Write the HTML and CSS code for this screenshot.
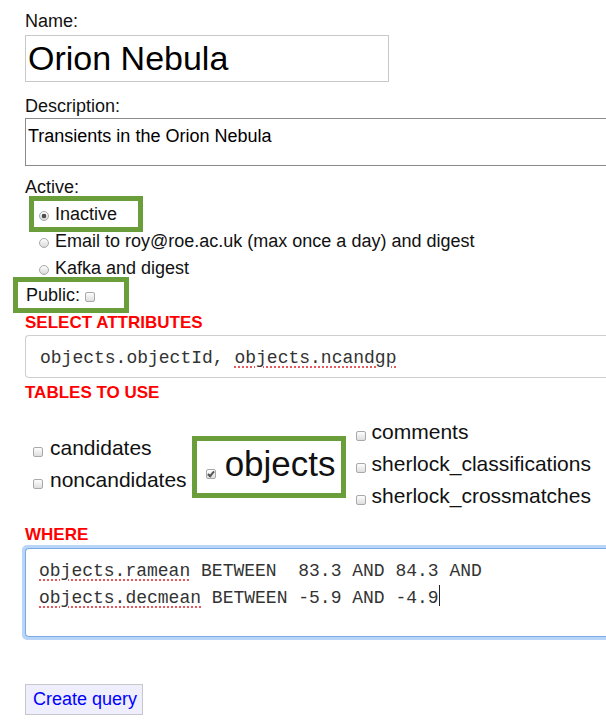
FILE: index.html
```html
<!DOCTYPE html>
<html lang="en">
<head>
<meta charset="utf-8">
<title>Create query</title>
<link rel="stylesheet" href="styles.css">
</head>
<body>
<form class="query-form">
  <label class="field-label" for="name">Name:</label>
  <input class="name-input" id="name" type="text" value="Orion Nebula">
  <label class="field-label desc-label" for="desc">Description:</label>
  <textarea class="desc-input" id="desc">Transients in the Orion Nebula</textarea>
  <div class="field-label active-label">Active:</div>
  <div class="radio-list">
    <label class="option highlight"><input class="radio" type="radio" name="active" checked>Inactive</label>
    <label class="option"><input class="radio" type="radio" name="active">Email to roy@roe.ac.uk (max once a day) and digest</label>
    <label class="option"><input class="radio" type="radio" name="active">Kafka and digest</label>
  </div>
  <label class="public highlight">Public: <input class="check" type="checkbox"></label>
  <h3 class="section-title">SELECT ATTRIBUTES</h3>
  <div class="code-box select-box">objects.objectId, <span class="misspelled">objects.ncandgp</span></div>
  <h3 class="section-title">TABLES TO USE</h3>
  <div class="tables">
    <div class="table-col left-col">
      <label class="table-opt"><input class="check" type="checkbox">candidates</label>
      <label class="table-opt"><input class="check" type="checkbox">noncandidates</label>
    </div>
    <label class="objects highlight"><input class="check" type="checkbox" checked>objects</label>
    <div class="table-col right-col">
      <label class="table-opt"><input class="check" type="checkbox">comments</label>
      <label class="table-opt"><input class="check" type="checkbox">sherlock_classifications</label>
      <label class="table-opt"><input class="check" type="checkbox">sherlock_crossmatches</label>
    </div>
  </div>
  <h3 class="section-title where-title">WHERE</h3>
  <div class="code-box where-box"><span class="misspelled">objects.ramean</span> BETWEEN  83.3 AND 84.3 AND
<span class="misspelled">objects.decmean</span> BETWEEN -5.9 AND -4.9<span class="caret"></span></div>
  <button class="create-btn" type="button">Create query</button>
</form>
</body>
</html>
```
FILE: styles.css
```css
html, body {
  margin: 0;
  padding: 0;
  overflow: hidden;
  background: #fff;
}
body {
  font-family: "Liberation Sans", Arial, Helvetica, sans-serif;
  font-size: 18px;
  color: #111;
}
.query-form {
  padding: 11px 0 0 25px;
}
.field-label {
  display: block;
  line-height: 20px;
}
.name-input {
  display: block;
  box-sizing: border-box;
  margin: 4px 0 0;
  width: 364px;
  height: 47px;
  border: 1px solid #c9c9c9;
  border-radius: 0;
  padding: 0 2px;
  font: 34px "Liberation Sans", Arial, sans-serif;
  color: #000;
  background: #fff;
  outline: none;
}
.desc-label {
  margin-top: 14px;
}
.desc-input {
  display: block;
  box-sizing: border-box;
  margin: 2px 0 0;
  width: 100%;
  height: 48px;
  border: 1px solid #8a8a8a;
  border-right: none;
  border-radius: 0;
  padding: 6px 2px;
  font: 18px/22px "Liberation Sans", Arial, sans-serif;
  color: #000;
  resize: none;
  outline: none;
}
.active-label {
  margin-top: 11px;
}
.radio-list {
  display: flex;
  flex-direction: column;
  align-items: flex-start;
  margin: 4px 0 0 9px;
}
.option {
  display: block;
  height: 27px;
  line-height: 27px;
  padding-left: 5px;
  white-space: nowrap;
}
.highlight {
  outline: 5px solid #6a9e3a;
}
.option.highlight {
  height: 26px;
  line-height: 26px;
  margin-bottom: 1px;
  padding-right: 21px;
}
.radio {
  -webkit-appearance: none;
  appearance: none;
  box-sizing: border-box;
  width: 10px;
  height: 10px;
  margin: 0 6px 0 0;
  border: 1px solid #a9a9a9;
  border-radius: 50%;
  background: linear-gradient(#fdfdfd, #d9d9d9);
  vertical-align: -1px;
}
.radio:checked {
  background: radial-gradient(circle, #4d4d4d 0 2px, transparent 2.6px), linear-gradient(#fdfdfd, #d9d9d9);
}
.check {
  -webkit-appearance: none;
  appearance: none;
  box-sizing: border-box;
  width: 10px;
  height: 10px;
  margin: 0;
  border: 1px solid #a9a9a9;
  border-radius: 2px;
  background: linear-gradient(#fdfdfd, #dedede);
  vertical-align: -1px;
}
.check:checked::after {
  content: "";
  display: block;
  box-sizing: border-box;
  width: 4px;
  height: 7px;
  margin: 0 0 0 2.5px;
  border-right: 2px solid #555;
  border-bottom: 2px solid #555;
  transform: rotate(40deg);
}
.public {
  display: block;
  width: fit-content;
  height: 26px;
  line-height: 26px;
  margin-left: -7px;
  padding: 0 29px 0 8px;
  white-space: nowrap;
}
.section-title {
  margin: 5px 0 0;
  font: bold 17px/20px "Liberation Sans", Arial, sans-serif;
  color: #f00;
}
.code-box {
  box-sizing: border-box;
  width: 100%;
  font: 18px "Liberation Mono", "Courier New", monospace;
  color: #333;
  white-space: pre;
}
.select-box {
  margin-top: 2px;
  border: 1px solid #cfcfcf;
  border-right: none;
  border-radius: 4px 0 0 4px;
  padding: 12px 14px 9px;
  line-height: 20px;
}
.misspelled {
  text-decoration: underline dotted #e8585a;
  text-decoration-thickness: 2px;
  text-underline-offset: 3px;
}
.tables {
  display: flex;
  align-items: center;
  margin-top: 13px;
}
.table-col {
  display: flex;
  flex-direction: column;
}
.left-col {
  margin-left: 8px;
}
.right-col {
  margin-left: 15px;
}
.table-opt {
  display: block;
  height: 32px;
  line-height: 32px;
  font-size: 21px;
  white-space: nowrap;
}
.table-opt .check {
  margin-right: 6px;
  vertical-align: -2px;
}
.left-col .table-opt .check {
  margin-right: 7px;
}
.objects {
  display: block;
  box-sizing: border-box;
  height: 52px;
  margin: 6px 0 0 10px;
  padding: 0 5px 7px 9px;
  line-height: 45px;
  font-size: 35px;
  white-space: nowrap;
}
.objects .check {
  margin-right: 9px;
  vertical-align: -3px;
}
.where-title {
  margin-top: 13px;
}
.where-box {
  margin-top: 3px;
  border: 1px solid #79a9e6;
  border-right: none;
  border-radius: 4px 0 0 4px;
  box-shadow: -3px 0 0 0 #b9d5f8, 0 3px 0 0 #b9d5f8, 0 -3px 0 0 #b9d5f8, -2px -2px 0 1px #b9d5f8, -2px 2px 0 1px #b9d5f8;
  padding: 9px 13px 24px;
  line-height: 27px;
}
.caret {
  display: inline-block;
  width: 1px;
  height: 21px;
  background: #222;
  vertical-align: -3px;
}
.create-btn {
  display: block;
  box-sizing: border-box;
  margin-top: 47px;
  width: 118px;
  height: 31px;
  padding: 0 0 0 7px;
  text-align: left;
  font: 18px "Liberation Sans", Arial, sans-serif;
  color: #00f;
  background: #eeeefd;
  border: 1px solid #c8c8cc;
  border-radius: 0;
}
```
